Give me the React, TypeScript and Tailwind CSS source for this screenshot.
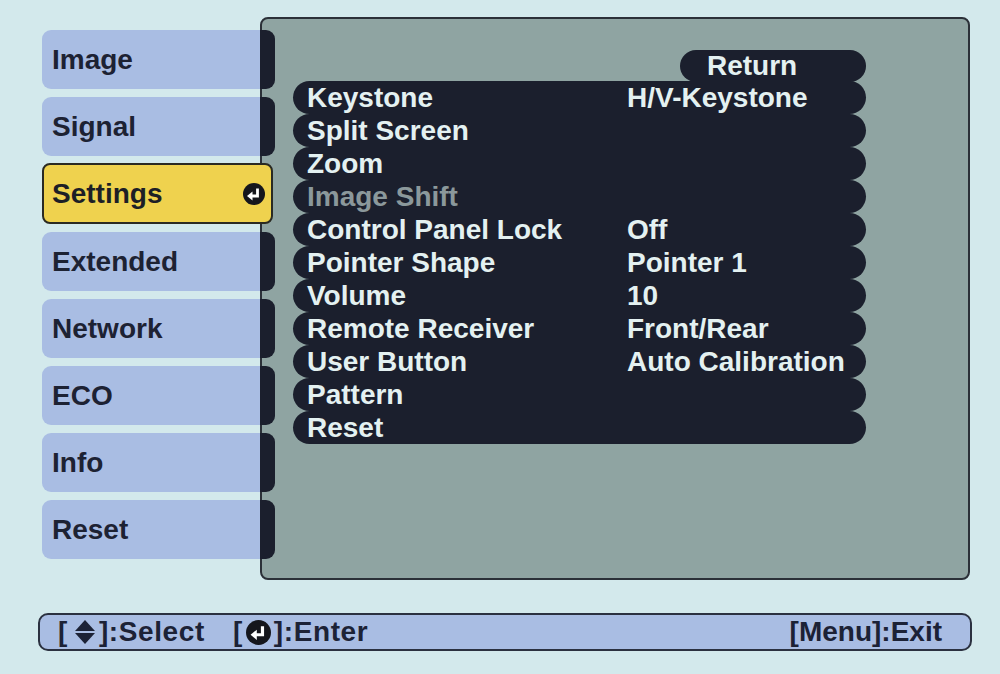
import React from "react";

const tabs = ["Image", "Signal", "Settings", "Extended", "Network", "ECO", "Info", "Reset"];

const rows: { label: string; value?: string; dim?: boolean }[] = [
  { label: "Keystone", value: "H/V-Keystone" },
  { label: "Split Screen" },
  { label: "Zoom" },
  { label: "Image Shift", dim: true },
  { label: "Control Panel Lock", value: "Off" },
  { label: "Pointer Shape", value: "Pointer 1" },
  { label: "Volume", value: "10" },
  { label: "Remote Receiver", value: "Front/Rear" },
  { label: "User Button", value: "Auto Calibration" },
  { label: "Pattern" },
  { label: "Reset" },
];

function EnterIcon({ size = 22 }: { size?: number }) {
  return (
    <svg width={size} height={size} viewBox="0 0 22 22">
      <circle cx="11" cy="11" r="11" fill="#15161c" />
      <path d="M14.5 5.5 V13 H8" stroke="#ffffff" strokeWidth="2.8" fill="none" strokeLinejoin="miter" />
      <path d="M4 13 L9.5 8.5 V17.5 Z" fill="#ffffff" />
    </svg>
  );
}

function SelectIcon() {
  return (
    <svg width="22" height="26" viewBox="0 0 22 26">
      <path d="M11 1 L21 12 H1 Z" fill="#1c2236" />
      <path d="M1 14 H21 L11 25 Z" fill="#1c2236" />
    </svg>
  );
}

export default function App() {
  return (
    <div className="w-[1000px] h-[674px] bg-[#d3e9ec] font-['Liberation_Sans',Arial,sans-serif] font-bold overflow-hidden flex flex-col">
      <div className="flex items-start pt-[17px] pl-[42px]">
        <div className="relative z-10 mt-[13px] flex w-[233px] flex-col gap-[8px]">
          {tabs.map((t) =>
            t === "Settings" ? (
              <div
                key={t}
                className="-mt-[1px] flex h-[61px] w-[231px] items-center justify-between rounded-[8px] border-2 border-[#2a2a22] bg-[#efd24e] pl-[8px] pr-[6px] text-[28px] text-[#1d1f26]"
              >
                <span>{t}</span>
                <EnterIcon />
              </div>
            ) : (
              <div key={t} className="flex h-[59px]">
                <div className="flex flex-1 items-center rounded-l-[9px] bg-[#a9bde3] pl-[10px] text-[28px] text-[#1d2233]">
                  {t}
                </div>
                <div className="w-[15px] rounded-r-[9px] bg-[#1b1f2d]" />
              </div>
            )
          )}
        </div>
        <div className="-ml-[15px] h-[563px] w-[710px] rounded-[8px] border-2 border-[#2b3038] bg-[#8fa4a2] pl-[31px] pt-[31px]">
          <div className="flex w-[573px] flex-col">
            <div className="-mb-[1px] flex justify-end">
              <div className="flex h-[32px] w-[186px] items-center rounded-full bg-[#1b1f2d] pl-[27px] text-[28px] text-[#e4f1f1]">
                Return
              </div>
            </div>
            {rows.map((r) => (
              <div
                key={r.label}
                className="flex h-[33px] items-center rounded-full bg-[#1b1f2d] pl-[14px] text-[28px] leading-[33px]"
              >
                <span className={"w-[320px] " + (r.dim ? "text-[#8b989b]" : "text-[#e4f1f1]")}>{r.label}</span>
                <span className="text-[#e4f1f1]">{r.value ?? ""}</span>
              </div>
            ))}
          </div>
        </div>
      </div>
      <div className="ml-[38px] mt-[33px] flex h-[38px] w-[934px] items-center justify-between rounded-[10px] border-2 border-[#2b3140] bg-[#a9bde3] pl-[18px] pr-[28px] text-[28px] text-[#1c2236]">
        <div className="flex items-center tracking-[0.6px]">
          <span>[</span>
          <span className="ml-[6px] mr-[3px] flex items-center">
            <SelectIcon />
          </span>
          <span>]:Select</span>
          <span className="ml-[28px]">[</span>
          <span className="mx-[3px] flex items-center">
            <EnterIcon size={25} />
          </span>
          <span>]:Enter</span>
        </div>
        <span>[Menu]:Exit</span>
      </div>
    </div>
  );
}
